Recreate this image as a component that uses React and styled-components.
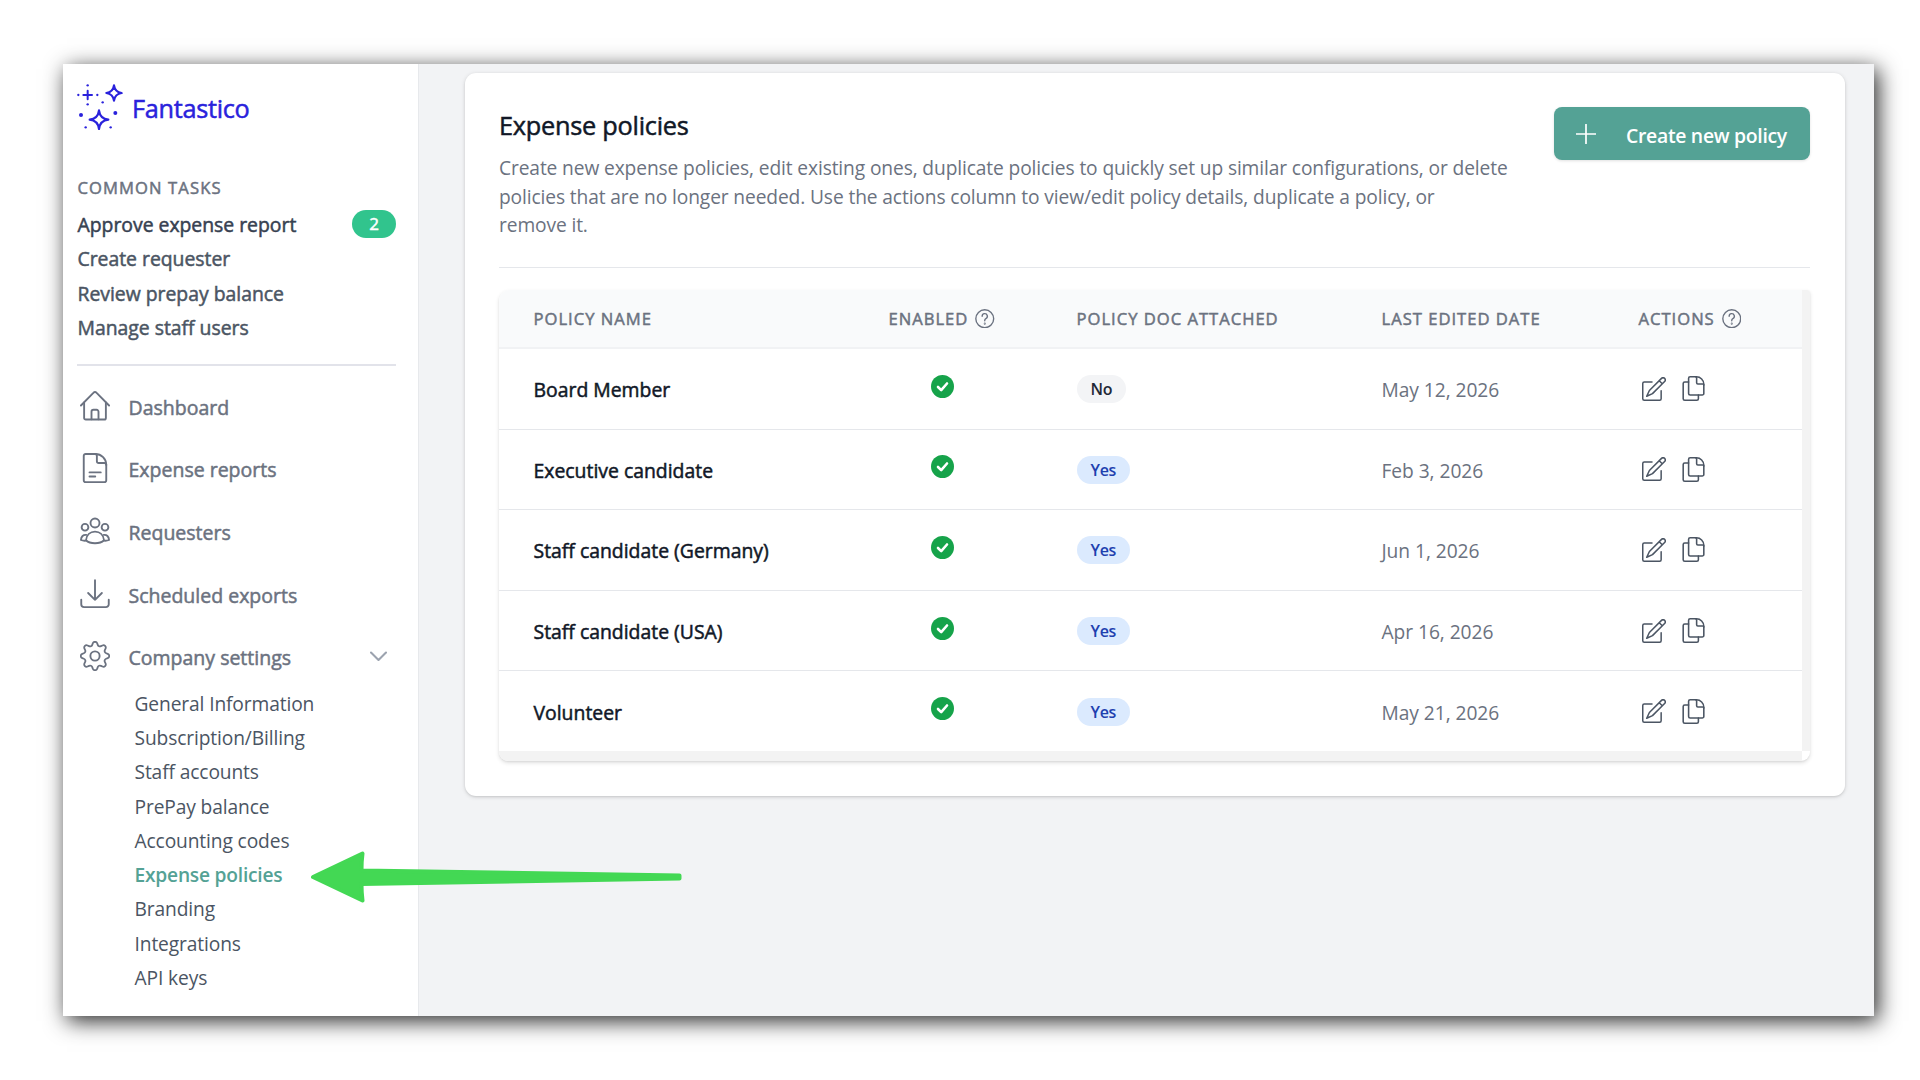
import React from "react";
import styled, { createGlobalStyle, css } from "styled-components";

const GlobalStyle = createGlobalStyle`
  * {
    box-sizing: border-box;
  }
  body {
    margin: 0;
    background: #ffffff;
    font-family: "Open Sans", "Noto Sans", sans-serif;
  }
`;

// Open Sans has no medium cut here, so thicken the regular one a little
const medium = css`
  font-weight: 400;
  -webkit-text-stroke: 0.5px currentColor;
`;

const Page = styled.div`
  width: 1920px;
  height: 1080px;
  padding: 64px 46px 64px 63px;
  overflow: hidden;
`;

const Window = styled.div`
  position: relative;
  display: flex;
  width: 1811px;
  height: 952px;
  background: #f2f3f5;
  box-shadow: 4px 5px 21px rgba(0, 0, 0, 0.85);
`;

const Sidebar = styled.aside`
  width: 356px;
  height: 100%;
  padding: 20px 22px 0 14px;
  background: #ffffff;
  border-right: 1px solid #e7e9ec;
`;

const Brand = styled.div`
  display: flex;
  align-items: center;
  gap: 9px;
  height: 46px;
  color: #2a22dc;
`;

const BrandName = styled.span`
  ${medium}
  padding-top: 2px;
  font-size: 25.3px;
  line-height: 34px;
  letter-spacing: -0.3px;
`;

const SectionLabel = styled.div`
  ${medium}
  margin: 44px 0 6px 0.5px;
  font-size: 16.6px;
  line-height: 28px;
  letter-spacing: 1.1px;
  color: #6b7280;
`;

const Task = styled.div`
  ${medium}
  display: flex;
  justify-content: space-between;
  height: 34.3px;
  padding-left: 0.5px;
  font-size: 19.4px;
  line-height: 34px;
  letter-spacing: -0.02px;
  color: ${({ $active }) => ($active ? "#374151" : "#4b5563")};
`;

const Count = styled.span`
  width: 44px;
  height: 28px;
  margin-top: 2px;
  border-radius: 14px;
  background: #31c48d;
  color: #ffffff;
  font-size: 17px;
  line-height: 28px;
  text-align: center;
`;

const Separator = styled.hr`
  height: 2px;
  margin: 19px 0 8px;
  border: 0;
  background: #e2e3ea;
`;

const NavItem = styled.div`
  display: flex;
  align-items: center;
  height: 62.7px;
  padding: 0 9px 0 2.5px;
  font-size: 19.5px;
  color: #6b7280;

  svg {
    flex: none;
  }
  span {
    ${medium}
    flex: 1;
    margin-left: 19px;
    padding-top: 3px;
  }
`;

const SubList = styled.div`
  margin-top: -1px;
`;

const SubItem = styled.div`
  height: 34.3px;
  padding-left: 57.5px;
  font-size: 19.2px;
  line-height: 34px;
  font-weight: ${({ $active }) => ($active ? 600 : 400)};
  letter-spacing: ${({ $active }) => ($active ? "-0.22px" : "-0.12px")};
  color: ${({ $active }) => ($active ? "#54a295" : "#4b5563")};
`;

const Main = styled.main`
  flex: 1;
  padding: 9px 29px 0 46px;
`;

const Card = styled.section`
  height: 723px;
  padding: 34px 35px 0 34px;
  border-radius: 11px;
  background: #ffffff;
  box-shadow: 0 1px 4px rgba(0, 0, 0, 0.14), 0 1px 2px rgba(0, 0, 0, 0.08);
`;

const CardHeader = styled.header`
  display: flex;
  justify-content: space-between;
  align-items: flex-start;
  height: 161px;
  border-bottom: 1px solid #e5e7eb;
`;

const Title = styled.h1`
  ${medium}
  margin: 0;
  font-size: 25.3px;
  line-height: 36px;
  letter-spacing: -0.25px;
  color: #111827;
`;

const Description = styled.p`
  width: 1020px;
  margin: 11px 0 0;
  font-size: 19.2px;
  line-height: 28.5px;
  letter-spacing: -0.12px;
  color: #6b7280;
`;

const CreateButton = styled.button`
  display: flex;
  align-items: center;
  width: 256px;
  height: 53px;
  padding: 0 0 0 22px;
  border: 0;
  border-radius: 8px;
  background: #54a295;
  box-shadow: 0 1px 3px rgba(0, 0, 0, 0.12);
  color: #ffffff;
  font: 600 19.4px "Open Sans", sans-serif;
  letter-spacing: -0.3px;

  span {
    margin: 3px 0 0 30px;
    white-space: nowrap;
  }
`;

const TableWrap = styled.div`
  display: grid;
  grid-template-columns: 1fr 8px;
  grid-template-rows: 461px 10px;
  margin-top: 22px;
  border-radius: 11px 3px 9px 9px;
  box-shadow: 0 2px 4px rgba(0, 0, 0, 0.12), 0 1px 2px rgba(0, 0, 0, 0.06);
  overflow: hidden;
`;

const Track = styled.div`
  background: #f3f3f3;
`;

const Row = styled.div`
  display: grid;
  grid-template-columns: 355px 188px 305px 257px 1fr;
  align-items: center;
  height: 80.6px;
  padding-left: 34.5px;
  border-bottom: 1px solid #e5e7eb;
  background: #ffffff;
`;

const HeadRow = styled(Row)`
  height: 59px;
  border-bottom: 2px solid #f1f2f4;
  background: #f9fafb;
  font-size: 16.6px;
  letter-spacing: 1px;
  color: #6b7280;
`;

const HeadCell = styled.div`
  ${medium}
  display: flex;
  align-items: center;
  gap: 7px;
  white-space: nowrap;
`;

const PolicyName = styled.div`
  ${medium}
  padding-top: 2px;
  font-size: 19.4px;
  color: #111827;
`;

const EnabledCell = styled.div`
  display: flex;
  justify-content: center;
  padding: 0 80px 5px 0;
`;

const Pill = styled.span`
  display: block;
  width: fit-content;
  height: 28px;
  margin-top: 1px;
  padding: 0 14px;
  border-radius: 14px;
  background: ${({ $yes }) => ($yes ? "#dbeafe" : "#f3f4f6")};
  color: ${({ $yes }) => ($yes ? "#1e40af" : "#1f2937")};
  font-size: 16px;
  font-weight: 600;
  line-height: 29px;
  letter-spacing: -0.3px;
`;

const DateCell = styled.div`
  padding-top: 2px;
  font-size: 19.2px;
  letter-spacing: -0.05px;
  color: #6b7280;
`;

const ActionsCell = styled.div`
  display: flex;
  align-items: center;
  gap: 15px;
  padding-left: 3px;
  color: #4b5563;
`;

const Arrow = styled.svg`
  position: absolute;
  left: 247px;
  top: 785px;
`;

function Icon({ size = 30, width = 1.5, children }) {
  return (
    <svg
      width={size}
      height={size}
      viewBox="0 0 24 24"
      fill="none"
      stroke="currentColor"
      strokeWidth={width}
      strokeLinecap="round"
      strokeLinejoin="round"
    >
      {children}
    </svg>
  );
}

const HomeIcon = () => (
  <Icon>
    <path d="M.75 11.6 10.9 1.3a1.5 1.5 0 0 1 2.2 0L23.25 11.6" />
    <path d="M3.3 9.2v12.3a1.3 1.3 0 0 0 1.3 1.3h14.8a1.3 1.3 0 0 0 1.3-1.3V9.2" />
    <path d="M9.2 22.6v-6.1a1.5 1.5 0 0 1 1.5-1.5h2.6a1.5 1.5 0 0 1 1.5 1.5v6.1" />
  </Icon>
);

const ReportIcon = () => (
  <Icon>
    <path d="M3 2.25A1.5 1.5 0 0 1 4.5.75h7.8A8.7 8.7 0 0 1 21 9.45v12.3a1.5 1.5 0 0 1-1.5 1.5h-15a1.5 1.5 0 0 1-1.5-1.5z" />
    <path d="M12 .75c1.1 0 1.5.7 1.5 1.5v4.3A1.5 1.5 0 0 0 15 8h4.5c.9 0 1.5.6 1.5 1.5" />
    <path d="M7.6 15.5h9M7.6 18.8h4.6" />
  </Icon>
);

const PeopleIcon = () => (
  <Icon>
    <circle cx="12" cy="5.6" r="3.6" />
    <circle cx="4" cy="9" r="2.7" />
    <circle cx="20" cy="9" r="2.7" />
    <path d="M12 12.5c3.8 0 6.8 2.6 7.2 6.9-1.7 1.7-4.2 2.4-7.2 2.4s-5.5-.7-7.2-2.4c.4-4.3 3.4-6.9 7.2-6.9z" />
    <path d="M5 15.1c-2.400-.3-4.100 1.300-4.250 4.100 1.200.5 2.500.7 4 .5M19 15.100c2.400-.3 4.100 1.300 4.250 4.100-1.200.5-2.500.7-4 .5" />
  </Icon>
);

const DownloadIcon = () => (
  <Icon>
    <path d="M12 1v15.6M6.5 11.2l5.500 5.500 5.500-5.500" />
    <path d="M1 16.500v3.700a2.300 2.300 0 0 0 2.300 2.300h17.400a2.300 2.300 0 0 0 2.300-2.300v-3.700" />
  </Icon>
);

const GearIcon = () => (
  <Icon>
    <path
      transform="rotate(22.5 12 12) translate(.6 .6) scale(.95)"
      d="M10.546 2.438a1.957 1.957 0 0 0 2.908 0L14.4 1.4a1.959 1.959 0 0 1 3.410 1.413l-.071 1.400a1.958 1.958 0 0 0 2.051 2.054l1.400-.071a1.959 1.959 0 0 1 1.410 3.410l-1.042.940a1.960 1.960 0 0 0 0 2.909l1.042.940a1.959 1.959 0 0 1-1.413 3.410l-1.400-.071a1.958 1.958 0 0 0-2.056 2.056l.071 1.400A1.959 1.959 0 0 1 14.400 22.600l-.941-1.041a1.959 1.959 0 0 0-2.908 0L9.606 22.600A1.959 1.959 0 0 1 6.200 21.192l.072-1.400a1.958 1.958 0 0 0-2.056-2.056l-1.400.071A1.958 1.958 0 0 1 1.400 14.400l1.041-.940a1.960 1.960 0 0 0 0-2.909L1.400 9.606A1.958 1.958 0 0 1 2.810 6.200l1.400.071a1.958 1.958 0 0 0 2.058-2.060L6.200 2.810A1.959 1.959 0 0 1 9.606 1.400z"
    />
    <circle cx="12" cy="12" r="3.7" />
  </Icon>
);

const HelpIcon = () => (
  <Icon size={19.5} width={1.7}>
    <circle cx="12" cy="12" r="11" />
    <path d="M8.8 8.9a3.200 3.200 0 1 1 4.600 2.900c-.9.500-1.400 1.100-1.400 2.100v.5" />
    <circle cx="12" cy="18" r=".4" />
  </Icon>
);

const EditIcon = () => (
  <Icon size={24}>
    <path d="M10 4.900H2.250a1.500 1.500 0 0 0-1.500 1.500v15.350a1.500 1.500 0 0 0 1.500 1.500h15.400a1.500 1.500 0 0 0 1.500-1.500V13.800" />
    <path d="M22.600 1.400a2.200 2.200 0 0 0-3.100 0L7.400 13.500l-2.700 5.800 5.800-2.700L22.600 4.500a2.200 2.200 0 0 0 0-3.100zM17.200 3.700l3.100 3.100" />
  </Icon>
);

const CopyIcon = () => (
  <Icon size={25}>
    <path d="M7.300 5.800H3.600a1.500 1.500 0 0 0-1.500 1.500v14.450a1.500 1.500 0 0 0 1.500 1.500h11.600a1.500 1.500 0 0 0 1.500-1.500V18.300" />
    <path d="M7.300 2.250a1.500 1.500 0 0 1 1.500-1.500h6a7.100 7.100 0 0 1 7.100 7.100v8.900a1.500 1.500 0 0 1-1.500 1.500H8.800a1.500 1.500 0 0 1-1.500-1.500z" />
    <path d="M14 .75c.7 0 1 .5 1 1.100V6.500a1.200 1.200 0 0 0 1.200 1.200h4.600c.7 0 1.100.4 1.100 1" />
  </Icon>
);

const CheckIcon = () => (
  <svg width="23" height="23" viewBox="0 0 23 23" fill="none">
    <circle cx="11.5" cy="11.5" r="11.5" fill="#16a34a" />
    <path
      d="M7 12l3.200 3.100L16 8.500"
      stroke="#ffffff"
      strokeWidth="2.6"
      strokeLinecap="round"
      strokeLinejoin="round"
    />
  </svg>
);

const Chevron = () => (
  <svg width="17" height="11" viewBox="0 0 17 11" fill="none">
    <path
      d="M1 1.500l7.500 7.500L16 1.500"
      stroke="#9ca3af"
      strokeWidth="2.1"
      strokeLinecap="round"
      strokeLinejoin="round"
    />
  </svg>
);

const PlusIcon = () => (
  <svg width="20" height="20" viewBox="0 0 20 20">
    <path d="M10 .5v19M.5 10h19" stroke="#ffffff" strokeWidth="1.7" strokeLinecap="round" />
  </svg>
);

function Logo() {
  return (
    <svg width="46" height="46" viewBox="0 0 138 138" fill="none" stroke="currentColor">
      <path d="M32 20v26M19 33h26" strokeWidth="6" strokeLinecap="round" />
      <g strokeWidth="6.5" strokeLinejoin="round">
        <path d="M111 4c2 14 9 21 23 23-14 2-21 9-23 23-2-14-9-21-23-23 14-2 21-9 23-23z" />
        <path d="M66 79c2 17 11 26 28 28-17 2-26 11-28 28-2-17-11-26-28-28 17-2 26-11 28-28z" />
      </g>
      <g fill="currentColor" stroke="none">
        <circle cx="12" cy="93" r="6" />
        <circle cx="115" cy="87" r="6" />
        <circle cx="32" cy="4" r="3.5" />
        <circle cx="32" cy="61" r="3.5" />
        <circle cx="4" cy="33" r="3.5" />
        <circle cx="61" cy="33" r="3.5" />
        <circle cx="77" cy="55" r="3.5" />
        <circle cx="26" cy="130" r="3.5" />
        <circle cx="101" cy="130" r="3.5" />
      </g>
    </svg>
  );
}

const tasks = ["Create requester", "Review prepay balance", "Manage staff users"];

const settings = [
  "General Information",
  "Subscription/Billing",
  "Staff accounts",
  "PrePay balance",
  "Accounting codes",
  "Expense policies",
  "Branding",
  "Integrations",
  "API keys",
];

const policies = [
  { name: "Board Member", doc: false, date: "May 12, 2026" },
  { name: "Executive candidate", doc: true, date: "Feb 3, 2026" },
  { name: "Staff candidate (Germany)", doc: true, date: "Jun 1, 2026" },
  { name: "Staff candidate (USA)", doc: true, date: "Apr 16, 2026" },
  { name: "Volunteer", doc: true, date: "May 21, 2026" },
];

function App() {
  return (
    <Page>
      <GlobalStyle />
      <Window>
        <Sidebar>
          <Brand>
            <Logo />
            <BrandName>Fantastico</BrandName>
          </Brand>

          <SectionLabel>COMMON TASKS</SectionLabel>
          <Task $active>
            Approve expense report <Count>2</Count>
          </Task>
          {tasks.map((task) => (
            <Task key={task}>{task}</Task>
          ))}

          <Separator />

          <NavItem>
            <HomeIcon />
            <span>Dashboard</span>
          </NavItem>
          <NavItem>
            <ReportIcon />
            <span>Expense reports</span>
          </NavItem>
          <NavItem>
            <PeopleIcon />
            <span>Requesters</span>
          </NavItem>
          <NavItem>
            <DownloadIcon />
            <span>Scheduled exports</span>
          </NavItem>
          <NavItem>
            <GearIcon />
            <span>Company settings</span>
            <Chevron />
          </NavItem>
          <SubList>
            {settings.map((item) => (
              <SubItem key={item} $active={item === "Expense policies"}>
                {item}
              </SubItem>
            ))}
          </SubList>
        </Sidebar>

        <Main>
          <Card>
            <CardHeader>
              <div>
                <Title>Expense policies</Title>
                <Description>
                  Create new expense policies, edit existing ones, duplicate
                  policies to quickly set up similar configurations, or delete
                  policies that are no longer needed. Use the actions column to
                  view/edit policy details, duplicate a policy, or
                  <br />
                  remove it.
                </Description>
              </div>
              <CreateButton>
                <PlusIcon />
                <span>Create new policy</span>
              </CreateButton>
            </CardHeader>

            <TableWrap>
              <div>
                <HeadRow>
                  <HeadCell>POLICY NAME</HeadCell>
                  <HeadCell>
                    ENABLED <HelpIcon />
                  </HeadCell>
                  <HeadCell>POLICY DOC ATTACHED</HeadCell>
                  <HeadCell>LAST EDITED DATE</HeadCell>
                  <HeadCell>
                    ACTIONS <HelpIcon />
                  </HeadCell>
                </HeadRow>
                {policies.map(({ name, doc, date }) => (
                  <Row key={name}>
                    <PolicyName>{name}</PolicyName>
                    <EnabledCell>
                      <CheckIcon />
                    </EnabledCell>
                    <Pill $yes={doc}>{doc ? "Yes" : "No"}</Pill>
                    <DateCell>{date}</DateCell>
                    <ActionsCell>
                      <EditIcon />
                      <CopyIcon />
                    </ActionsCell>
                  </Row>
                ))}
              </div>
              <Track />
              <Track />
            </TableWrap>
          </Card>
        </Main>

        <Arrow width="374" height="56" viewBox="0 0 374 56">
          <path
            d="M3 28 52.500 4.500Q51.500 12 51.500 21.500L369.500 26.500V29.500L51.500 35Q51.500 44 52.500 51.500z"
            fill="#43d854"
            stroke="#43d854"
            strokeWidth="4"
            strokeLinejoin="round"
          />
        </Arrow>
      </Window>
    </Page>
  );
}

export default App;
